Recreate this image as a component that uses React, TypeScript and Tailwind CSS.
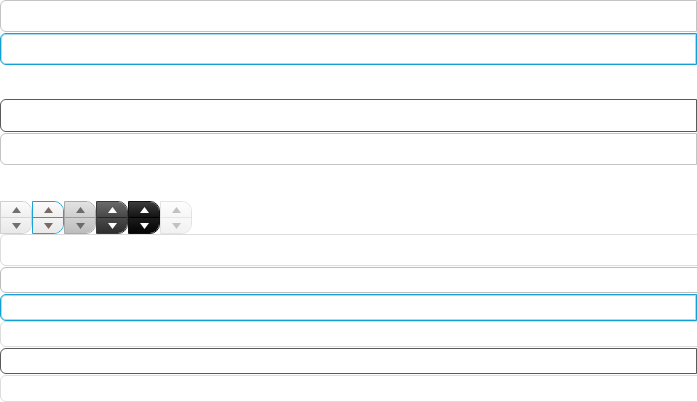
import React from "react";

type Tone = "light" | "blue" | "dark" | "faint" | "mid";

const borders: Record<Tone, string> = {
  light: "border-[#c4c4c4]",
  blue: "border-[#14a0d4] shadow-[inset_0_0_0_1px_#a9dcef]",
  dark: "border-[#5a5a5a]",
  faint: "border-[#dcdcdc]",
  mid: "border-[#bcbcbc]",
};

function Field({
  tone,
  height,
  open = false,
  className = "",
}: {
  tone: Tone;
  height: string;
  open?: boolean;
  className?: string;
}) {
  return (
    <div
      className={`${height} ${borders[tone]} ${
        open ? "w-[720px]" : "w-full"
      } rounded-l-[6px] border bg-white ${className}`}
    />
  );
}

type SpinTone = "plain" | "focus" | "gray" | "dark" | "black" | "disabled";

const spinStyles: Record<
  SpinTone,
  { box: string; top: string; bottom: string; line: string; arrow: string }
> = {
  plain: {
    box: "border-[#cfcfcf]",
    top: "bg-gradient-to-b from-[#fbfbfb] to-[#f0f0f0]",
    bottom: "bg-gradient-to-b from-[#f3f3f3] to-[#e9e9e9]",
    line: "bg-[#d4d4d4]",
    arrow: "#707070",
  },
  focus: {
    box: "border-[#1aa3d6]",
    top: "bg-gradient-to-b from-[#fbfbfb] to-[#f0f0f0]",
    bottom: "bg-gradient-to-b from-[#f3f3f3] to-[#e9e9e9]",
    line: "bg-[#1aa3d6]",
    arrow: "#7b6a62",
  },
  gray: {
    box: "border-[#a9a9a9]",
    top: "bg-gradient-to-b from-[#e2e2e2] to-[#cfcfcf]",
    bottom: "bg-gradient-to-b from-[#d0d0d0] to-[#bdbdbd]",
    line: "bg-[#9d9d9d]",
    arrow: "#6b6b6b",
  },
  dark: {
    box: "border-[#3a3a3a]",
    top: "bg-gradient-to-b from-[#6a6a6a] to-[#484848]",
    bottom: "bg-gradient-to-b from-[#4a4a4a] to-[#2e2e2e]",
    line: "bg-[#252525]",
    arrow: "#ffffff",
  },
  black: {
    box: "border-[#111]",
    top: "bg-gradient-to-b from-[#3c3c3c] to-[#141414]",
    bottom: "bg-gradient-to-b from-[#1c1c1c] to-[#050505]",
    line: "bg-black",
    arrow: "#ffffff",
  },
  disabled: {
    box: "border-[#e3e3e3]",
    top: "bg-gradient-to-b from-[#fdfdfd] to-[#f6f6f6]",
    bottom: "bg-gradient-to-b from-[#f8f8f8] to-[#f1f1f1]",
    line: "bg-[#e6e6e6]",
    arrow: "#c2c2c2",
  },
};

function Arrow({ up, color }: { up: boolean; color: string }) {
  return (
    <svg width="9" height="6" viewBox="0 0 9 6">
      <path d={up ? "M4.5 0 L9 6 L0 6 Z" : "M0 0 L9 0 L4.5 6 Z"} fill={color} />
    </svg>
  );
}

function Spinner({ tone }: { tone: SpinTone }) {
  const s = spinStyles[tone];
  return (
    <div
      className={`w-[32px] h-[33px] border ${s.box} rounded-r-[10px] overflow-hidden flex flex-col`}
    >
      <div className={`flex-1 flex items-center justify-center ${s.top}`}>
        <Arrow up color={s.arrow} />
      </div>
      <div className={`h-px ${s.line}`} />
      <div className={`flex-1 flex items-center justify-center ${s.bottom}`}>
        <Arrow up={false} color={s.arrow} />
      </div>
    </div>
  );
}

export default function App() {
  return (
    <div className="w-[697px] h-[402px] overflow-hidden bg-white font-['Liberation_Sans',sans-serif]">
      <div className="flex flex-col gap-px">
        <Field tone="light" height="h-[32px]" />
        <Field tone="blue" height="h-[32px]" />
      </div>

      <div className="flex flex-col gap-px mt-[34px]">
        <Field tone="dark" height="h-[33px]" />
        <Field tone="light" height="h-[32px]" />
      </div>

      <div className="flex mt-[36px]">
        <Spinner tone="plain" />
        <Spinner tone="focus" />
        <Spinner tone="gray" />
        <Spinner tone="dark" />
        <Spinner tone="black" />
        <Spinner tone="disabled" />
      </div>

      <div className="flex flex-col">
        <Field tone="faint" height="h-[32px]" open />
        <Field tone="mid" height="h-[26px]" open className="mt-px" />
        <Field tone="blue" height="h-[27px]" className="mt-px" />
        <Field tone="faint" height="h-[26px]" open />
        <Field tone="dark" height="h-[26px]" className="mt-px" />
        <Field tone="faint" height="h-[27px]" open className="mt-px" />
      </div>
    </div>
  );
}
